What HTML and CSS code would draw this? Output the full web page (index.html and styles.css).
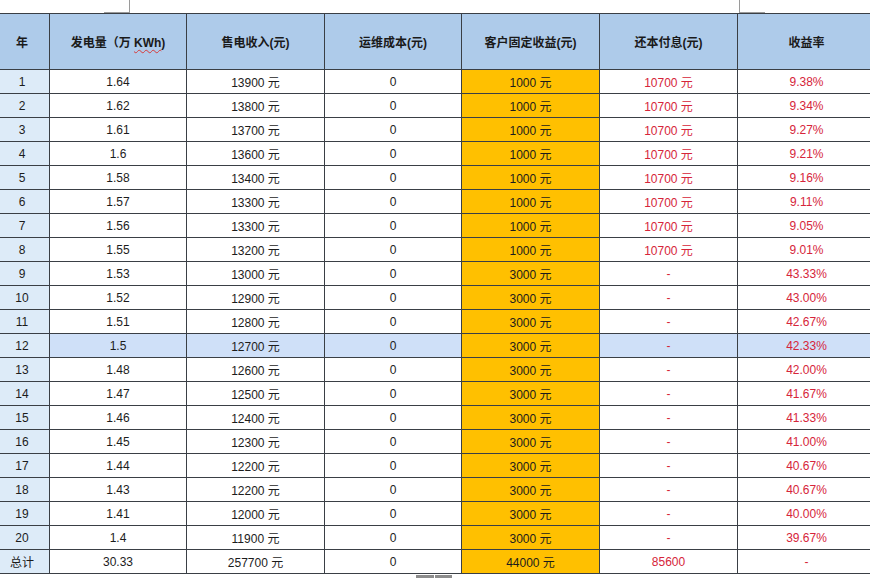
FILE: index.html
```html
<!DOCTYPE html>
<html lang="zh">
<head>
<meta charset="utf-8">
<link rel="stylesheet" href="styles.css">
</head>
<body>
<div class="page">
  <div class="handle handle-left"></div>
  <div class="handle handle-right"></div>
  <table class="sheet">
    <colgroup>
      <col class="c-year"><col class="c-w"><col class="c-w2"><col class="c-w"><col class="c-w2"><col class="c-w2"><col class="c-w2">
    </colgroup>
    <thead>
      <tr>
        <th>年</th>
        <th>发电量（万 <span class="squiggle">KWh</span>)</th>
        <th>售电收入(元)</th>
        <th>运维成本(元)</th>
        <th>客户固定收益(元)</th>
        <th>还本付息(元)</th>
        <th>收益率</th>
      </tr>
    </thead>
    <tbody>
      <tr><td class="yr">1</td><td>1.64</td><td>13900 元</td><td>0</td><td class="gold">1000 元</td><td class="red">10700 元</td><td class="red">9.38%</td></tr>
      <tr><td class="yr">2</td><td>1.62</td><td>13800 元</td><td>0</td><td class="gold">1000 元</td><td class="red">10700 元</td><td class="red">9.34%</td></tr>
      <tr><td class="yr">3</td><td>1.61</td><td>13700 元</td><td>0</td><td class="gold">1000 元</td><td class="red">10700 元</td><td class="red">9.27%</td></tr>
      <tr><td class="yr">4</td><td>1.6</td><td>13600 元</td><td>0</td><td class="gold">1000 元</td><td class="red">10700 元</td><td class="red">9.21%</td></tr>
      <tr><td class="yr">5</td><td>1.58</td><td>13400 元</td><td>0</td><td class="gold">1000 元</td><td class="red">10700 元</td><td class="red">9.16%</td></tr>
      <tr><td class="yr">6</td><td>1.57</td><td>13300 元</td><td>0</td><td class="gold">1000 元</td><td class="red">10700 元</td><td class="red">9.11%</td></tr>
      <tr><td class="yr">7</td><td>1.56</td><td>13300 元</td><td>0</td><td class="gold">1000 元</td><td class="red">10700 元</td><td class="red">9.05%</td></tr>
      <tr><td class="yr">8</td><td>1.55</td><td>13200 元</td><td>0</td><td class="gold">1000 元</td><td class="red">10700 元</td><td class="red">9.01%</td></tr>
      <tr><td class="yr">9</td><td>1.53</td><td>13000 元</td><td>0</td><td class="gold">3000 元</td><td class="red">-</td><td class="red">43.33%</td></tr>
      <tr><td class="yr">10</td><td>1.52</td><td>12900 元</td><td>0</td><td class="gold">3000 元</td><td class="red">-</td><td class="red">43.00%</td></tr>
      <tr><td class="yr">11</td><td>1.51</td><td>12800 元</td><td>0</td><td class="gold">3000 元</td><td class="red">-</td><td class="red">42.67%</td></tr>
      <tr class="selected"><td class="yr">12</td><td>1.5</td><td>12700 元</td><td>0</td><td class="gold">3000 元</td><td class="red">-</td><td class="red">42.33%</td></tr>
      <tr><td class="yr">13</td><td>1.48</td><td>12600 元</td><td>0</td><td class="gold">3000 元</td><td class="red">-</td><td class="red">42.00%</td></tr>
      <tr><td class="yr">14</td><td>1.47</td><td>12500 元</td><td>0</td><td class="gold">3000 元</td><td class="red">-</td><td class="red">41.67%</td></tr>
      <tr><td class="yr">15</td><td>1.46</td><td>12400 元</td><td>0</td><td class="gold">3000 元</td><td class="red">-</td><td class="red">41.33%</td></tr>
      <tr><td class="yr">16</td><td>1.45</td><td>12300 元</td><td>0</td><td class="gold">3000 元</td><td class="red">-</td><td class="red">41.00%</td></tr>
      <tr><td class="yr">17</td><td>1.44</td><td>12200 元</td><td>0</td><td class="gold">3000 元</td><td class="red">-</td><td class="red">40.67%</td></tr>
      <tr><td class="yr">18</td><td>1.43</td><td>12200 元</td><td>0</td><td class="gold">3000 元</td><td class="red">-</td><td class="red">40.67%</td></tr>
      <tr><td class="yr">19</td><td>1.41</td><td>12000 元</td><td>0</td><td class="gold">3000 元</td><td class="red">-</td><td class="red">40.00%</td></tr>
      <tr><td class="yr">20</td><td>1.4</td><td>11900 元</td><td>0</td><td class="gold">3000 元</td><td class="red">-</td><td class="red">39.67%</td></tr>
      <tr><td class="yr">总计</td><td>30.33</td><td>257700 元</td><td>0</td><td class="gold">44000 元</td><td class="red">85600</td><td class="red">-</td></tr>
    </tbody>
  </table>
  <div class="resize-handle"><span></span><span></span></div>
</div>
</body>
</html>
```

FILE: styles.css
```css
html, body {
  margin: 0;
  padding: 0;
  background: #ffffff;
  overflow: hidden;
}

.page {
  position: relative;
  width: 870px;
  height: 578px;
  overflow: hidden;
  padding-top: 13px;
  box-sizing: border-box;
  font-family: "Liberation Sans", "Noto Sans CJK SC", Arial, sans-serif;
  font-size: 12px;
  color: #1c1c1c;
}

.handle {
  position: absolute;
  top: 0;
  width: 25px;
  height: 12px;
  border-bottom: 1px solid #9a9a9a;
}

.handle-left {
  left: 104px;
  border-right: 1px solid #9a9a9a;
}

.handle-right {
  left: 739px;
  border-left: 1px solid #9a9a9a;
}

.sheet {
  border-collapse: collapse;
  table-layout: fixed;
  width: 881px;
  margin-left: -6px;
}

.c-year { width: 55px; }
.c-w { width: 137px; }
.c-w2 { width: 138px; }

.sheet th,
.sheet td {
  border: 1px solid #3a3f45;
  padding: 0;
  text-align: center;
  vertical-align: middle;
  white-space: nowrap;
  overflow: hidden;
}

.sheet th {
  height: 55px;
  background: #aecbea;
  font-weight: bold;
  color: #1a1a1a;
}

.sheet td {
  height: 23px;
  background: #ffffff;
}

.sheet td.yr {
  background: #ddebf8;
}

.sheet tr.selected td {
  background: #cfe0f8;
}

.sheet tr.selected td.yr {
  background: #ddebf8;
}

.sheet td.gold,
.sheet tr.selected td.gold {
  background: #ffc000;
}

.sheet td.red {
  color: #d6253a;
}

.squiggle {
  text-decoration: underline wavy #d83a3a;
  text-decoration-thickness: 1px;
  text-underline-offset: 2px;
}

.resize-handle {
  position: absolute;
  left: 416px;
  top: 575px;
  width: 36px;
  height: 6px;
  display: flex;
  gap: 1px;
  background: #ffffff;
}

.resize-handle span {
  flex: 1;
  background: #8c8c8c;
}
```
